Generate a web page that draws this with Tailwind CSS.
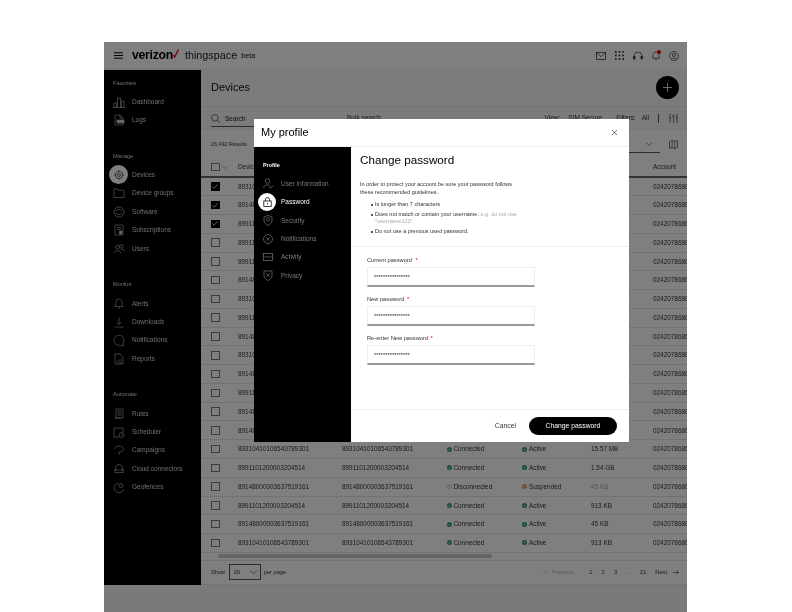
<!DOCTYPE html>
<html lang="en">
<head>
<meta charset="utf-8">
<title>Devices - My profile</title>
<script src="https://cdn.jsdelivr.net/npm/@tailwindcss/browser@4"></script>
</head>
<body class="bg-white overflow-hidden">
<div class="h-[612px] w-[792px] pl-[104px] pt-[42px] font-['Liberation_Sans',sans-serif] overflow-hidden">
  <div class="relative w-[583px] h-[570px] bg-[#f4f4f4] overflow-hidden blur-[0.35px]">
    <!-- top bar -->
    <header class="h-[28px] bg-white border-b border-[#eee] flex items-center pl-[10px] pr-[8px] text-black">
      <svg class="w-[9px] h-[7px] mr-[9px]" viewBox="0 0 9 7" fill="none" stroke="#000" stroke-width="1"><path d="M0 .8h9M0 3.5h9M0 6.2h9"/></svg>
      <span class="text-[12.300px] font-bold tracking-[-0.3px] leading-none">verizon</span>
      <svg class="w-[6px] h-[9px] -mt-[5px] mr-[6px]" viewBox="0 0 6 9" fill="none" stroke="#e00" stroke-width="1.3"><path d="M.5 6l1.200 2L5.500.5"/></svg>
      <span class="text-[10.800px] leading-none text-[#222]">thingspace</span>
      <span class="text-[7.300px] ml-[4px] mt-[1px] text-[#111]">beta</span>
      <div class="ml-auto flex items-center gap-[8px]">
        <svg class="w-[10px] h-[10px]" viewBox="0 0 10 10" fill="none" stroke="#222" stroke-width=".7"><rect x=".4" y="1.500" width="9.200" height="7"/><path d="M.4 1.700L5 5.600l4.600-3.900"/></svg>
        <svg class="w-[9px] h-[9px] ml-[1px]" viewBox="0 0 9 9" fill="#333"><rect x="0" y="0" width="1.700" height="1.700"/><rect x="3.600" y="0" width="1.700" height="1.700"/><rect x="7.200" y="0" width="1.700" height="1.700"/><rect x="0" y="3.600" width="1.700" height="1.700"/><rect x="3.600" y="3.600" width="1.700" height="1.700"/><rect x="7.200" y="3.600" width="1.700" height="1.700"/><rect x="0" y="7.200" width="1.700" height="1.700"/><rect x="3.600" y="7.200" width="1.700" height="1.700"/><rect x="7.200" y="7.200" width="1.700" height="1.700"/></svg>
        <svg class="w-[10px] h-[10px] ml-[1px]" viewBox="0 0 10 10" fill="none" stroke="#333" stroke-width=".7"><path d="M1 7V5a4 4 0 018 0v2"/><rect x=".6" y="5.500" width="1.400" height="2.500" fill="#333"/><rect x="8" y="5.500" width="1.400" height="2.500" fill="#333"/></svg>
        <div class="relative w-[10px] h-[11px]">
          <svg class="w-[10px] h-[11px]" viewBox="0 0 10 11" fill="none" stroke="#333" stroke-width=".7"><path d="M1 8.200c1.200-1 1.200-2 1.200-3.600C2.200 3 3.400 2 5 2s2.800 1 2.800 2.600c0 1.600 0 2.600 1.200 3.600zM4 9.500h2"/></svg>
          <span class="absolute right-0 top-0 w-[4px] h-[4px] rounded-full bg-[#e00]"></span>
        </div>
        <svg class="w-[10px] h-[10px]" viewBox="0 0 10 10" fill="none" stroke="#333" stroke-width=".7"><circle cx="5" cy="5" r="4.500"/><circle cx="5" cy="4" r="1.600"/><path d="M2.200 8.200C3 6.800 7 6.800 7.800 8.200"/></svg>
      </div>
    </header>

    <div class="flex h-[515px]">
      <!-- sidebar -->
      <aside class="w-[97px] shrink-0 bg-black text-[#dcdcdc] text-[6.500px] pt-[8.500px] pl-[9px] flex flex-col gap-[22.500px]">
        <section>
          <h3 class="h-[9px] leading-[9px] text-[5.600px] mb-[5px]">Favorites</h3>
          <a class="flex items-center h-[18.400px]"><svg class="w-[12px] h-[12px] mr-[7px]" viewBox="0 0 12 12" fill="none" stroke="#ccc" stroke-width=".6"><path d="M0 11.500h12M1 11.500V7h2.500v4.500M4.500 11.500V2h3v9.500M8.500 11.500V5H11v6.500"/></svg>Dashboard</a>
          <a class="flex items-center h-[18.400px]"><svg class="w-[12px] h-[12px] mr-[7px]" viewBox="0 0 12 12" fill="none" stroke="#ccc" stroke-width=".6"><path d="M2 11V1h5l3 3v7zM7 1v3h3"/><rect x="4" y="6" width="7" height="3" fill="#ccc"/></svg>Logs</a>
        </section>
        <section>
          <h3 class="h-[9px] leading-[9px] text-[5.600px] mb-[5px]">Manage</h3>
          <a class="relative flex items-center h-[18.400px]"><span class="absolute -left-[4px] top-[-0.3px] w-[19px] h-[19px] rounded-full bg-white flex items-center justify-center"><svg class="w-[10px] h-[10px]" viewBox="0 0 10 10" fill="none" stroke="#222" stroke-width=".7"><circle cx="5" cy="5" r="3.600"/><circle cx="5" cy="5" r="1.500"/><path d="M5 0v1.400M5 8.600V10M0 5h1.400M8.600 5H10"/></svg></span><span class="w-[19px]"></span>Devices</a>
          <a class="flex items-center h-[18.400px]"><svg class="w-[12px] h-[12px] mr-[7px]" viewBox="0 0 12 12" fill="none" stroke="#ccc" stroke-width=".6"><path d="M1 10.500V2h3.500l1 1.300H11v7.200z"/></svg>Device groups</a>
          <a class="flex items-center h-[18.400px]"><svg class="w-[12px] h-[12px] mr-[7px]" viewBox="0 0 12 12" fill="none" stroke="#ccc" stroke-width=".6"><circle cx="6" cy="6" r="5"/><path d="M3 5c1-2 5-2 6 0M9 7c-1 2-5 2-6 0"/></svg>Software</a>
          <a class="flex items-center h-[18.400px]"><svg class="w-[12px] h-[12px] mr-[7px]" viewBox="0 0 12 12" fill="none" stroke="#ccc" stroke-width=".6"><path d="M2 1h8v10H2zM4 3.500h4M4 5.500h4"/><rect x="6.500" y="7" width="2.500" height="3" fill="#ccc"/></svg>Subscriptions</a>
          <a class="flex items-center h-[18.400px]"><svg class="w-[12px] h-[12px] mr-[7px]" viewBox="0 0 12 12" fill="none" stroke="#ccc" stroke-width=".6"><circle cx="4.500" cy="4" r="2"/><circle cx="8.500" cy="3.500" r="1.700"/><path d="M1 10c.5-3 6-3 7 0M8 6.500c1.500-.3 3 .5 3.500 2"/></svg>Users</a>
        </section>
        <section>
          <h3 class="h-[9px] leading-[9px] text-[5.600px] mb-[5px]">Monitor</h3>
          <a class="flex items-center h-[18.400px]"><svg class="w-[12px] h-[12px] mr-[7px]" viewBox="0 0 12 12" fill="none" stroke="#ccc" stroke-width=".6"><path d="M1.500 9.500c1.200-1 1.500-2 1.500-4C3 3.500 4.300 2 6 2s3 1.500 3 3.500c0 2 .3 3 1.500 4zM5 11h2"/></svg>Alerts</a>
          <a class="flex items-center h-[18.400px]"><svg class="w-[12px] h-[12px] mr-[7px]" viewBox="0 0 12 12" fill="none" stroke="#ccc" stroke-width=".6"><path d="M6 1v7.500M3.500 6L6 8.500 8.500 6M1.500 11h9"/></svg>Downloads</a>
          <a class="flex items-center h-[18.400px]"><svg class="w-[12px] h-[12px] mr-[7px]" viewBox="0 0 12 12" fill="none" stroke="#ccc" stroke-width=".6"><path d="M10 10l1 1.300H6a5 5 0 115-5c0 1.500-.3 2.700-1 3.700z"/></svg>Notifications</a>
          <a class="flex items-center h-[18.400px]"><svg class="w-[12px] h-[12px] mr-[7px]" viewBox="0 0 12 12" fill="none" stroke="#ccc" stroke-width=".6"><path d="M2 11V1h5l3 3v7zM4 7l1.500 1.500L4 10M6 7h3M6 9.500h3"/></svg>Reports</a>
        </section>
        <section>
          <h3 class="h-[9px] leading-[9px] text-[5.600px] mb-[5px]">Automate</h3>
          <a class="flex items-center h-[18.400px]"><svg class="w-[12px] h-[12px] mr-[7px]" viewBox="0 0 12 12" fill="none" stroke="#ccc" stroke-width=".6"><path d="M3 11V2h7v9zM1.500 11h7M4.500 4h4M4.500 6h4M4.500 8h4"/></svg>Rules</a>
          <a class="flex items-center h-[18.400px]"><svg class="w-[12px] h-[12px] mr-[7px]" viewBox="0 0 12 12" fill="none" stroke="#ccc" stroke-width=".6"><path d="M1 2h9v4M1 2v9h5"/><circle cx="8.500" cy="9" r="2.500"/><path d="M8.500 7.700V9h1"/></svg>Scheduler</a>
          <a class="flex items-center h-[18.400px]"><svg class="w-[12px] h-[12px] mr-[7px]" viewBox="0 0 12 12" fill="none" stroke="#ccc" stroke-width=".6"><path d="M1 5c1-2 3-3 5-3s4 1 5 3c-1 2-3 3-5 3M6 8v3"/></svg>Campaigns</a>
          <a class="flex items-center h-[18.400px]"><svg class="w-[12px] h-[12px] mr-[7px]" viewBox="0 0 12 12" fill="none" stroke="#ccc" stroke-width=".6"><path d="M2.500 7V5a3.500 3.500 0 017 0v2M1 7h10M2 7v3M10 7v3M2 9.500h8"/></svg>Cloud connectors</a>
          <a class="flex items-center h-[18.400px]"><svg class="w-[12px] h-[12px] mr-[7px]" viewBox="0 0 12 12" fill="none" stroke="#ccc" stroke-width=".6"><path d="M5.500 2a4.800 4.800 0 105 6.500"/><circle cx="8" cy="4.500" r="2" fill="none"/></svg>Geofences</a>
        </section>
      </aside>

      <!-- main -->
      <main class="flex-1 min-w-0 bg-white overflow-hidden text-[#333]">
        <div class="h-[37px] bg-[#f6f6f6] border-b border-[#e8e8e8] flex items-center pl-[10px] pr-[8.500px]">
          <h1 class="text-[11px] leading-none -mt-[2px] text-[#111]">Devices</h1>
          <button class="ml-auto w-[23px] h-[23px] rounded-full bg-black flex items-center justify-center -mt-[1px]"><svg class="w-[9px] h-[9px]" viewBox="0 0 10 10" stroke="#fff" stroke-width=".9"><path d="M5 0v10M0 5h10"/></svg></button>
        </div>
        <div class="h-[23px] bg-[#f6f6f6] border-b border-[#e8e8e8] flex items-center pl-[10px] pr-[9px] text-[6.500px]">
          <div class="w-[120px] h-[16px] flex items-center border-b border-[#555] mr-[16px] mt-[2px]">
            <svg class="w-[9px] h-[9px] mr-[5px]" viewBox="0 0 9 9" fill="none" stroke="#222" stroke-width=".6"><circle cx="3.800" cy="3.800" r="3.300"/><path d="M6.200 6.200L9 9"/></svg>
            <span class="text-[#111]">Search</span>
          </div>
          <span>Bulk search</span>
          <span class="ml-auto mr-[8px]">View:</span><span class="mr-[14px]">SIM Secure</span>
          <span class="mr-[6px]">Filters:</span><span class="mr-[9px]">All</span>
          <span class="w-px h-[9px] bg-[#555] mr-[10px]"></span>
          <svg class="w-[9px] h-[9px]" viewBox="0 0 9 9" fill="none" stroke="#333" stroke-width=".6"><path d="M1 0v3M1 5.500V9M4.500 0v1M4.500 3.500V9M8 0v3M8 5.500V9"/><circle cx="1" cy="4" r="1"/><circle cx="4.500" cy="2.200" r="1"/><circle cx="8" cy="4" r="1"/></svg>
        </div>
        <div class="h-[28px] bg-white flex items-center pl-[10px] pr-[9px] text-[5.400px]">
          <span>26,492 Results</span>
          <div class="ml-auto w-[90px] h-[18px] border-b border-[#555] flex items-center justify-end pr-[8px] mr-[9px]"><svg class="w-[6px] h-[4px]" viewBox="0 0 6 4" fill="none" stroke="#333" stroke-width=".6"><path d="M0 .5l3 3 3-3"/></svg></div>
          <svg class="w-[9px] h-[9px]" viewBox="0 0 9 9" fill="none" stroke="#222" stroke-width=".6"><path d="M.5 1.500l2.600-1 2.800 1 2.600-1v7l-2.600 1-2.800-1-2.600 1zM3.100.500v7M5.900 1.500v7"/></svg>
        </div>
        <!-- table -->
        <div class="h-[19.500px] border-b-2 border-[#666] flex items-center text-[6.400px] whitespace-nowrap">
          <div class="w-[37px] pl-[10px] flex items-center shrink-0"><span class="block w-[8.500px] h-[8.500px] border border-[#777]"></span><svg class="w-[6px] h-[4px] ml-[2px]" viewBox="0 0 6 4" fill="none" stroke="#444" stroke-width=".5"><path d="M0 .5l3 3 3-3"/></svg></div>
          <div class="w-[104px] shrink-0">Device ID</div>
          <div class="w-[105px] shrink-0">ICCID</div>
          <div class="w-[75px] shrink-0">Connection</div>
          <div class="w-[69px] shrink-0">State</div>
          <div class="w-[62px] shrink-0">Usage</div>
          <div class="w-[60px] shrink-0">Account</div>
        </div>
        <div class="text-[6.400px] whitespace-nowrap">
          <div class="flex items-center h-[18.780px] border-b border-[#e4e4e4]"><div class="w-[37px] pl-[10px] shrink-0"><span class="flex items-center justify-center w-[8.500px] h-[8.500px] bg-black"><svg class="w-[6px] h-[5px]" viewBox="0 0 6 5" fill="none" stroke="#ddd" stroke-width=".9"><path d="M.5 2.500l1.700 1.700L5.500.5"/></svg></span></div><div class="w-[104px] shrink-0">89310410106543789301</div><div class="w-[105px] shrink-0">89310410106543789301</div><div class="w-[75px] shrink-0">Connected</div><div class="w-[69px] shrink-0">Active</div><div class="w-[62px] shrink-0">15.57 MB</div><div class="w-[60px] shrink-0">02420786867</div></div>
          <div class="flex items-center h-[18.780px] border-b border-[#e4e4e4]"><div class="w-[37px] pl-[10px] shrink-0"><span class="flex items-center justify-center w-[8.500px] h-[8.500px] bg-black"><svg class="w-[6px] h-[5px]" viewBox="0 0 6 5" fill="none" stroke="#ddd" stroke-width=".9"><path d="M.5 2.500l1.700 1.700L5.500.5"/></svg></span></div><div class="w-[104px] shrink-0">89148000003637519161</div><div class="w-[105px] shrink-0">89148000003637519161</div><div class="w-[75px] shrink-0">Connected</div><div class="w-[69px] shrink-0">Active</div><div class="w-[62px] shrink-0">45 KB</div><div class="w-[60px] shrink-0">02420786867</div></div>
          <div class="flex items-center h-[18.780px] border-b border-[#e4e4e4]"><div class="w-[37px] pl-[10px] shrink-0"><span class="flex items-center justify-center w-[8.500px] h-[8.500px] bg-black"><svg class="w-[6px] h-[5px]" viewBox="0 0 6 5" fill="none" stroke="#ddd" stroke-width=".9"><path d="M.5 2.500l1.700 1.700L5.500.5"/></svg></span></div><div class="w-[104px] shrink-0">8991101200003204514</div><div class="w-[105px] shrink-0">8991101200003204514</div><div class="w-[75px] shrink-0">Connected</div><div class="w-[69px] shrink-0">Active</div><div class="w-[62px] shrink-0">1.54 GB</div><div class="w-[60px] shrink-0">02420786867</div></div>
          <div class="flex items-center h-[18.780px] border-b border-[#e4e4e4]"><div class="w-[37px] pl-[10px] shrink-0"><span class="block w-[8.500px] h-[8.500px] border border-[#777]"></span></div><div class="w-[104px] shrink-0">8991101200003204514</div><div class="w-[105px] shrink-0">8991101200003204514</div><div class="w-[75px] shrink-0">Connected</div><div class="w-[69px] shrink-0">Active</div><div class="w-[62px] shrink-0">913 KB</div><div class="w-[60px] shrink-0">02420786867</div></div>
          <div class="flex items-center h-[18.780px] border-b border-[#e4e4e4]"><div class="w-[37px] pl-[10px] shrink-0"><span class="block w-[8.500px] h-[8.500px] border border-[#777]"></span></div><div class="w-[104px] shrink-0">8991101200003204514</div><div class="w-[105px] shrink-0">8991101200003204514</div><div class="w-[75px] shrink-0">Connected</div><div class="w-[69px] shrink-0">Active</div><div class="w-[62px] shrink-0">913 KB</div><div class="w-[60px] shrink-0">02420786867</div></div>
          <div class="flex items-center h-[18.780px] border-b border-[#e4e4e4]"><div class="w-[37px] pl-[10px] shrink-0"><span class="block w-[8.500px] h-[8.500px] border border-[#777]"></span></div><div class="w-[104px] shrink-0">89148000003637519161</div><div class="w-[105px] shrink-0">89148000003637519161</div><div class="w-[75px] shrink-0">Connected</div><div class="w-[69px] shrink-0">Active</div><div class="w-[62px] shrink-0">45 KB</div><div class="w-[60px] shrink-0">02420786867</div></div>
          <div class="flex items-center h-[18.780px] border-b border-[#e4e4e4]"><div class="w-[37px] pl-[10px] shrink-0"><span class="block w-[8.500px] h-[8.500px] border border-[#777]"></span></div><div class="w-[104px] shrink-0">89310410106543789301</div><div class="w-[105px] shrink-0">89310410106543789301</div><div class="w-[75px] shrink-0">Connected</div><div class="w-[69px] shrink-0">Active</div><div class="w-[62px] shrink-0">913 KB</div><div class="w-[60px] shrink-0">02420786867</div></div>
          <div class="flex items-center h-[18.780px] border-b border-[#e4e4e4]"><div class="w-[37px] pl-[10px] shrink-0"><span class="block w-[8.500px] h-[8.500px] border border-[#777]"></span></div><div class="w-[104px] shrink-0">8991101200003204514</div><div class="w-[105px] shrink-0">8991101200003204514</div><div class="w-[75px] shrink-0">Connected</div><div class="w-[69px] shrink-0">Active</div><div class="w-[62px] shrink-0">913 KB</div><div class="w-[60px] shrink-0">02420786867</div></div>
          <div class="flex items-center h-[18.780px] border-b border-[#e4e4e4]"><div class="w-[37px] pl-[10px] shrink-0"><span class="block w-[8.500px] h-[8.500px] border border-[#777]"></span></div><div class="w-[104px] shrink-0">89148000003637519161</div><div class="w-[105px] shrink-0">89148000003637519161</div><div class="w-[75px] shrink-0">Connected</div><div class="w-[69px] shrink-0">Active</div><div class="w-[62px] shrink-0">45 KB</div><div class="w-[60px] shrink-0">02420786867</div></div>
          <div class="flex items-center h-[18.780px] border-b border-[#e4e4e4]"><div class="w-[37px] pl-[10px] shrink-0"><span class="block w-[8.500px] h-[8.500px] border border-[#777]"></span></div><div class="w-[104px] shrink-0">89310410106543789301</div><div class="w-[105px] shrink-0">89310410106543789301</div><div class="w-[75px] shrink-0">Connected</div><div class="w-[69px] shrink-0">Active</div><div class="w-[62px] shrink-0">913 KB</div><div class="w-[60px] shrink-0">02420786867</div></div>
          <div class="flex items-center h-[18.780px] border-b border-[#e4e4e4]"><div class="w-[37px] pl-[10px] shrink-0"><span class="block w-[8.500px] h-[8.500px] border border-[#777]"></span></div><div class="w-[104px] shrink-0">89148000003637519161</div><div class="w-[105px] shrink-0">89148000003637519161</div><div class="w-[75px] shrink-0">Connected</div><div class="w-[69px] shrink-0">Active</div><div class="w-[62px] shrink-0">45 KB</div><div class="w-[60px] shrink-0">02420786867</div></div>
          <div class="flex items-center h-[18.780px] border-b border-[#e4e4e4]"><div class="w-[37px] pl-[10px] shrink-0"><span class="block w-[8.500px] h-[8.500px] border border-[#777]"></span></div><div class="w-[104px] shrink-0">8991101200003204514</div><div class="w-[105px] shrink-0">8991101200003204514</div><div class="w-[75px] shrink-0">Connected</div><div class="w-[69px] shrink-0">Active</div><div class="w-[62px] shrink-0">913 KB</div><div class="w-[60px] shrink-0">02420786867</div></div>
          <div class="flex items-center h-[18.780px] border-b border-[#e4e4e4]"><div class="w-[37px] pl-[10px] shrink-0"><span class="block w-[8.500px] h-[8.500px] border border-[#777]"></span></div><div class="w-[104px] shrink-0">89148000003637519161</div><div class="w-[105px] shrink-0">89148000003637519161</div><div class="w-[75px] shrink-0">Connected</div><div class="w-[69px] shrink-0">Active</div><div class="w-[62px] shrink-0">45 KB</div><div class="w-[60px] shrink-0">02420786867</div></div>
          <div class="flex items-center h-[18.780px] border-b border-[#e4e4e4]"><div class="w-[37px] pl-[10px] shrink-0"><span class="block w-[8.500px] h-[8.500px] border border-[#777]"></span></div><div class="w-[104px] shrink-0">89148000003637519161</div><div class="w-[105px] shrink-0">89148000003637519161</div><div class="w-[75px] shrink-0">Connected</div><div class="w-[69px] shrink-0">Active</div><div class="w-[62px] shrink-0">45 KB</div><div class="w-[60px] shrink-0">02420786867</div></div>
          <div class="flex items-center h-[18.780px] border-b border-[#e4e4e4]"><div class="w-[37px] pl-[10px] shrink-0"><span class="block w-[8.500px] h-[8.500px] border border-[#777]"></span></div><div class="w-[104px] shrink-0">89310410106543789301</div><div class="w-[105px] shrink-0">89310410106543789301</div><div class="w-[75px] shrink-0 flex items-center"><svg class="w-[5px] h-[5px] mr-[1.500px]" viewBox="0 0 5 5"><circle cx="2.500" cy="2.500" r="2.500" fill="#2aa55f"/><path d="M1.300 2.600l.9.9 1.500-1.800" fill="none" stroke="#fff" stroke-width=".6"/></svg>Connected</div><div class="w-[69px] shrink-0 flex items-center"><svg class="w-[5px] h-[5px] mr-[2px]" viewBox="0 0 5 5"><circle cx="2.500" cy="2.500" r="2.500" fill="#2aa55f"/><path d="M1.500 2.500h2" stroke="#fff" stroke-width=".6"/></svg>Active</div><div class="w-[62px] shrink-0">15.57 MB</div><div class="w-[60px] shrink-0">02420786867</div></div>
          <div class="flex items-center h-[18.780px] border-b border-[#e4e4e4]"><div class="w-[37px] pl-[10px] shrink-0"><span class="block w-[8.500px] h-[8.500px] border border-[#777]"></span></div><div class="w-[104px] shrink-0">8991101200003204514</div><div class="w-[105px] shrink-0">8991101200003204514</div><div class="w-[75px] shrink-0 flex items-center"><svg class="w-[5px] h-[5px] mr-[1.500px]" viewBox="0 0 5 5"><circle cx="2.500" cy="2.500" r="2.500" fill="#2aa55f"/><path d="M1.300 2.600l.9.9 1.500-1.800" fill="none" stroke="#fff" stroke-width=".6"/></svg>Connected</div><div class="w-[69px] shrink-0 flex items-center"><svg class="w-[5px] h-[5px] mr-[2px]" viewBox="0 0 5 5"><circle cx="2.500" cy="2.500" r="2.500" fill="#2aa55f"/><path d="M1.500 2.500h2" stroke="#fff" stroke-width=".6"/></svg>Active</div><div class="w-[62px] shrink-0">1.54 GB</div><div class="w-[60px] shrink-0">02420786867</div></div>
          <div class="flex items-center h-[18.780px] border-b border-[#e4e4e4]"><div class="w-[37px] pl-[10px] shrink-0"><span class="block w-[8.500px] h-[8.500px] border border-[#777]"></span></div><div class="w-[104px] shrink-0">89148000003637519161</div><div class="w-[105px] shrink-0">89148000003637519161</div><div class="w-[75px] shrink-0 flex items-center"><svg class="w-[5px] h-[5px] mr-[1.500px]" viewBox="0 0 5 5" fill="none" stroke="#777" stroke-width=".5"><circle cx="2.500" cy="2.500" r="2.200" stroke-dasharray=".7 .5"/><path d="M1.500 1.500l2 2M3.500 1.500l-2 2"/></svg>Disconnected</div><div class="w-[69px] shrink-0 flex items-center"><svg class="w-[5px] h-[5px] mr-[2px]" viewBox="0 0 5 5"><circle cx="2.500" cy="2.500" r="2.500" fill="#ee9a4d"/><path d="M1.500 2.500h2" stroke="#fff" stroke-width=".6"/></svg>Suspended</div><div class="w-[62px] shrink-0 text-[#aaa]">45 KB</div><div class="w-[60px] shrink-0">02420786867</div></div>
          <div class="flex items-center h-[18.780px] border-b border-[#e4e4e4]"><div class="w-[37px] pl-[10px] shrink-0"><span class="block w-[8.500px] h-[8.500px] border border-[#777]"></span></div><div class="w-[104px] shrink-0">8991101200003204514</div><div class="w-[105px] shrink-0">8991101200003204514</div><div class="w-[75px] shrink-0 flex items-center"><svg class="w-[5px] h-[5px] mr-[1.500px]" viewBox="0 0 5 5"><circle cx="2.500" cy="2.500" r="2.500" fill="#2aa55f"/><path d="M1.300 2.600l.9.9 1.500-1.800" fill="none" stroke="#fff" stroke-width=".6"/></svg>Connected</div><div class="w-[69px] shrink-0 flex items-center"><svg class="w-[5px] h-[5px] mr-[2px]" viewBox="0 0 5 5"><circle cx="2.500" cy="2.500" r="2.500" fill="#2aa55f"/><path d="M1.500 2.500h2" stroke="#fff" stroke-width=".6"/></svg>Active</div><div class="w-[62px] shrink-0">913 KB</div><div class="w-[60px] shrink-0">02420786868</div></div>
          <div class="flex items-center h-[18.780px] border-b border-[#e4e4e4]"><div class="w-[37px] pl-[10px] shrink-0"><span class="block w-[8.500px] h-[8.500px] border border-[#777]"></span></div><div class="w-[104px] shrink-0">89148000003637519161</div><div class="w-[105px] shrink-0">89148000003637519161</div><div class="w-[75px] shrink-0 flex items-center"><svg class="w-[5px] h-[5px] mr-[1.500px]" viewBox="0 0 5 5"><circle cx="2.500" cy="2.500" r="2.500" fill="#2aa55f"/><path d="M1.300 2.600l.9.9 1.500-1.800" fill="none" stroke="#fff" stroke-width=".6"/></svg>Connected</div><div class="w-[69px] shrink-0 flex items-center"><svg class="w-[5px] h-[5px] mr-[2px]" viewBox="0 0 5 5"><circle cx="2.500" cy="2.500" r="2.500" fill="#2aa55f"/><path d="M1.500 2.500h2" stroke="#fff" stroke-width=".6"/></svg>Active</div><div class="w-[62px] shrink-0">45 KB</div><div class="w-[60px] shrink-0">02420786867</div></div>
          <div class="flex items-center h-[18.780px] border-b border-[#e4e4e4]"><div class="w-[37px] pl-[10px] shrink-0"><span class="block w-[8.500px] h-[8.500px] border border-[#777]"></span></div><div class="w-[104px] shrink-0">89310410106543789301</div><div class="w-[105px] shrink-0">89310410106543789301</div><div class="w-[75px] shrink-0 flex items-center"><svg class="w-[5px] h-[5px] mr-[1.500px]" viewBox="0 0 5 5"><circle cx="2.500" cy="2.500" r="2.500" fill="#2aa55f"/><path d="M1.300 2.600l.9.9 1.500-1.800" fill="none" stroke="#fff" stroke-width=".6"/></svg>Connected</div><div class="w-[69px] shrink-0 flex items-center"><svg class="w-[5px] h-[5px] mr-[2px]" viewBox="0 0 5 5"><circle cx="2.500" cy="2.500" r="2.500" fill="#2aa55f"/><path d="M1.500 2.500h2" stroke="#fff" stroke-width=".6"/></svg>Active</div><div class="w-[62px] shrink-0">913 KB</div><div class="w-[60px] shrink-0">02420786867</div></div>
        </div>
        <!-- horizontal scrollbar -->
        <div class="h-[8px] border-b border-[#e4e4e4] flex items-center pl-[17px]"><div class="w-[274px] h-[4px] rounded-full bg-[#c8c8c8]"></div></div>
        <!-- footer -->
        <div class="h-[24px] bg-white border-b border-[#e8e8e8] flex items-center pl-[10px] pr-[8px] text-[5.700px] whitespace-nowrap">
          <span>Show</span>
          <div class="w-[32px] h-[16px] border border-[#555] ml-[3.500px] mr-[3px] flex items-center justify-between pl-[4px] pr-[3px]">20<svg class="w-[7px] h-[4px]" viewBox="0 0 7 4" fill="none" stroke="#333" stroke-width=".6"><path d="M0 .5l3.500 3 3.500-3"/></svg></div>
          <span>per page</span>
          <svg class="ml-auto w-[5px] h-[4px] mr-[4px]" viewBox="0 0 5 4" fill="none" stroke="#bbb" stroke-width=".5"><path d="M5 2H.5M2 .5L.5 2 2 3.500"/></svg><span class="text-[#bbb] mr-[15px]">Previous</span>
          <span class="mr-[9px]">1</span><span class="mr-[9.500px]">2</span><span class="mr-[9px]">3</span><span class="mr-[9px] text-[#888]">...</span><span class="mr-[9px]">21</span><span class="mr-[6px]">Next</span>
          <svg class="w-[6px] h-[5px]" viewBox="0 0 6 5" fill="none" stroke="#333" stroke-width=".6"><path d="M0 2.500h5.500M3.500 .5l2 2-2 2"/></svg>
        </div>
      </main>
    </div>

    <!-- dimming overlay -->
    <div class="absolute inset-0 bg-black/50"></div>

    <!-- modal -->
    <div class="absolute left-[150px] top-[77px] w-[375px] h-[323px] bg-white flex flex-col text-[#222]">
      <div class="h-[28px] shrink-0 border-b border-[#eee] flex items-center pl-[7px] pr-[12px]">
        <h2 class="text-[11px] text-black leading-none">My profile</h2>
        <svg class="ml-auto w-[5px] h-[5px]" viewBox="0 0 5 5" stroke="#333" stroke-width=".7"><path d="M0 0l5 5M5 0L0 5"/></svg>
      </div>
      <div class="flex flex-1 min-h-0">
        <nav class="w-[97px] shrink-0 bg-black text-[#7c7c7c] text-[6.500px] pt-[13.500px] pl-[9px]">
          <h3 class="h-[9px] leading-[9px] text-[5.400px] font-bold text-white mb-[5px]">Profile</h3>
          <a class="flex items-center h-[18.400px]"><svg class="w-[10px] h-[11px] mr-[8px]" viewBox="0 0 10 11" fill="none" stroke="#777" stroke-width=".7"><circle cx="4.500" cy="3" r="2.300"/><path d="M.5 10c.2-3 5-4 7-2M6 9l1.200 1L10 8"/></svg>User information</a>
          <a class="relative flex items-center h-[18.400px] text-white"><span class="absolute -left-[5px] top-0 w-[18px] h-[18px] rounded-full bg-white flex items-center justify-center"><svg class="w-[9px] h-[10px]" viewBox="0 0 9 10" fill="none" stroke="#111" stroke-width=".8"><rect x=".8" y="4" width="7.400" height="5.500"/><path d="M2.500 4V2.500a2 2 0 014 0V4M4.500 6v1.500"/></svg></span><span class="w-[18px]"></span>Password</a>
          <a class="flex items-center h-[18.400px]"><svg class="w-[10px] h-[11px] mr-[8px]" viewBox="0 0 10 11" fill="none" stroke="#777" stroke-width=".7"><path d="M5 .5l4 1.500v3.500c0 2.500-2 4-4 5-2-1-4-2.500-4-5V2z"/><circle cx="5" cy="4.500" r="1.700"/></svg>Security</a>
          <a class="flex items-center h-[18.400px]"><svg class="w-[10px] h-[10px] mr-[8px]" viewBox="0 0 10 10" fill="none" stroke="#777" stroke-width=".7"><circle cx="5" cy="5" r="4.500"/><path d="M3.300 3.300l3.400 3.400M6.700 3.300L3.300 6.700"/></svg>Notifications</a>
          <a class="flex items-center h-[18.400px]"><svg class="w-[10px] h-[8px] mr-[8px]" viewBox="0 0 10 8" fill="none" stroke="#777" stroke-width=".7"><rect x=".4" y=".4" width="9.200" height="7.200"/><path d="M1.500 4.500l1.500-1.500 1.500 1.500 1.500-1 1 1 1.500-1"/></svg>Activity</a>
          <a class="flex items-center h-[18.400px]"><svg class="w-[10px] h-[11px] mr-[8px]" viewBox="0 0 10 11" fill="none" stroke="#777" stroke-width=".7"><path d="M1 1h8v5c0 2-2 3.500-4 4.500C3 9.500 1 8 1 6zM3.500 3.500l3 3M6.500 3.500l-3 3"/></svg>Privacy</a>
        </nav>
        <div class="flex-1 min-w-0 flex flex-col">
          <div class="h-[100px] shrink-0 border-b border-[#eee] pl-[9px] pr-[16px] pt-[6px]">
            <h2 class="text-[11.700px] leading-[14px] text-black">Change password</h2>
            <p class="text-[5.500px] leading-[8.200px] mt-[13px] text-[#333]">In order to protect your account be sure your password follows<br>these recommended guidelines.</p>
            <ul class="text-[5.500px] text-[#333] mt-[5px] pl-[11px]">
              <li class="leading-[7.500px] mb-[2px] pl-[4px] relative"><span class="absolute left-0 top-[3px] w-[2px] h-[2px] rounded-full bg-[#222]"></span>Is longer than 7 characters</li>
              <li class="leading-[7.500px] mb-[2px] pl-[4px] relative"><span class="absolute left-0 top-[3px] w-[2px] h-[2px] rounded-full bg-[#222]"></span>Does not match or contain your username. <span class="text-[#aaa]">e.g. do not use<br>"username123".</span></li>
              <li class="leading-[7.500px] pl-[4px] relative"><span class="absolute left-0 top-[3px] w-[2px] h-[2px] rounded-full bg-[#222]"></span>Do not use a previous used password.</li>
            </ul>
          </div>
          <div class="flex-1 pl-[16px] pt-[8px] text-[5.700px] text-[#333]">
            <label class="block h-[10px] leading-[10px]">Current password <span class="text-[#e00] ml-[2px]">*</span></label>
            <div class="w-[168px] h-[20px] mt-[2px] border border-[#eee] border-b-2 border-b-[#999] flex items-center pl-[6px] text-[6px] tracking-[-0.1px] leading-none">****************</div>
            <label class="block h-[10px] leading-[10px] mt-[7px]">New password <span class="text-[#e00] ml-[1px]">*</span></label>
            <div class="w-[168px] h-[20px] mt-[2px] border border-[#eee] border-b-2 border-b-[#999] flex items-center pl-[6px] text-[6px] tracking-[-0.1px] leading-none">****************</div>
            <label class="block h-[10px] leading-[10px] mt-[7px]">Re-enter New password <span class="text-[#e00] ml-[1px]">*</span></label>
            <div class="w-[168px] h-[20px] mt-[2px] border border-[#eee] border-b-2 border-b-[#999] flex items-center pl-[6px] text-[6px] tracking-[-0.1px] leading-none">****************</div>
          </div>
          <div class="h-[33px] shrink-0 border-t border-[#eee] flex items-center justify-end pr-[12px]">
            <span class="text-[6.800px] mr-[13px] mt-[1px] text-[#333]">Cancel</span>
            <button class="w-[88px] h-[18px] rounded-full bg-black text-white text-[6.800px] leading-none">Change password</button>
          </div>
        </div>
      </div>
    </div>
  </div>
</div>
</body>
</html>
